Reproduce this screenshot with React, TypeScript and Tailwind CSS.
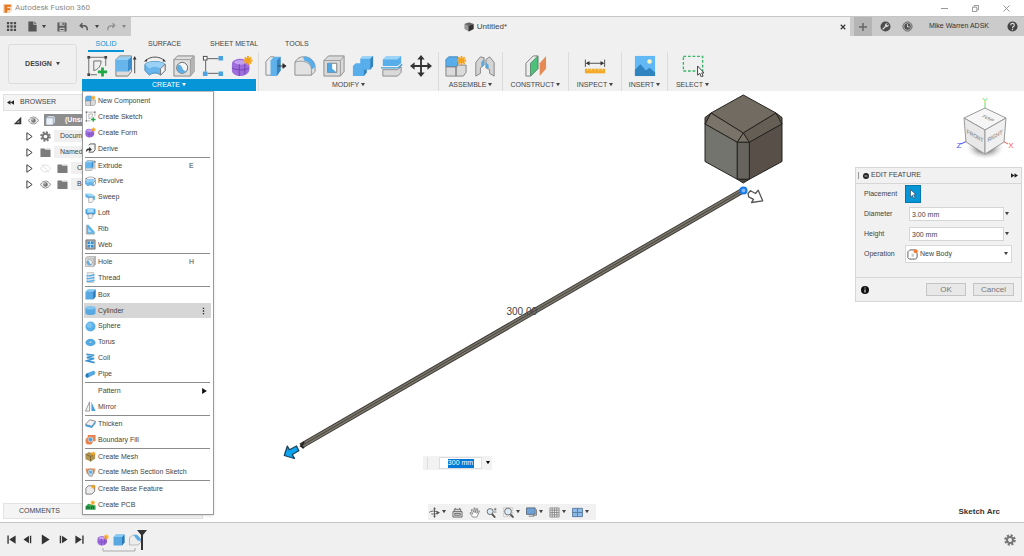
import type { ReactNode } from 'react';
import { clsx } from 'clsx';

type IconProps = { className?: string };
type IconType = (props: IconProps) => ReactNode;

const makeIcon = (children: ReactNode): IconType => ({ className = 'size-6' }) => (
  <svg viewBox="0 0 24 24" className={clsx('shrink-0', className)} aria-hidden="true">{children}</svg>
);

const star = (x: number, y: number, r = 5) => (
  <g stroke="#f5a31a" strokeWidth="2">
    <path d={`M${x - r} ${y}H${x + r}M${x} ${y - r}V${y + r}M${x - r + 1.5} ${y - r + 1.5}L${x + r - 1.5} ${y + r - 1.5}M${x + r - 1.5} ${y - r + 1.5}L${x - r + 1.5} ${y + r - 1.5}`} />
    <circle cx={x} cy={y} r={r / 2.4} fill="#f5a31a" stroke="none" />
  </g>
);

/* ---------- modelling icons ---------- */

const SketchIcon = makeIcon(
  <>
    <path d="M4 2.500H20M3 4V20M5 21.500H12M21.500 4V12" stroke="#666" strokeWidth="1" fill="none" />
    <path d="M8.500 6.500H16.500C16.500 12 13 16 8.500 17Z" fill="none" stroke="#666" />
    <path d="M1.500 1h3v3h-3zM20 1h3v3h-3zM1.500 20h3v3h-3z" fill="#444" />
    <path d="M18 13.500v10M13 18.500h10" stroke="#22a845" strokeWidth="3" />
  </>
);
const ExtrudeIcon = makeIcon(
  <>
    <path d="M1 21V5l4-4h13v17l-4 5H1z" fill="#dcdcdc" stroke="#777" />
    <path d="M1 18V5.500L5 2h13l-4 3.500V18z" fill="#67b5ea" />
    <path d="M14 5.500L18 2v13l-4 3.500z" fill="#3b8ecb" />
    <path d="M1 5.500L5 2h13l-4 3.500z" fill="#94d0f5" />
    <path d="M21.500 20V4" stroke="#444" />
    <path d="M19.500 5l2-4 2 4z" fill="#333" />
  </>
);
const RevolveIcon = makeIcon(
  <>
    <path d="M2 6C7 1 17 1 22 6" fill="none" stroke="#444" />
    <path d="M0 7l3-3 .6 3zM24 7l-3-3-.6 3z" fill="#333" />
    <path d="M1 10c6-4 16-4 22 0v7l-5 5c-3-3-9-3-12 0l-5-5z" fill="#67b5ea" stroke="#4287b7" />
    <path d="M1 10c6-4 16-4 22 0l-5 5c-3-3-9-3-12 0z" fill="#98d1f5" />
    <path d="M18 15l5-5v7l-5 5z" fill="#f2f2f2" stroke="#777" />
  </>
);
const HoleIcon = makeIcon(
  <>
    <path d="M1 5l4-4h18v17l-4 5H1z" fill="#dedede" stroke="#808080" />
    <path d="M19 5l4-4v17l-4 5z" fill="#b4b4b4" />
    <path d="M1 5h18v18M19 5l4-4" fill="none" stroke="#999" />
    <circle cx="10" cy="14" r="6" fill="#f6f6f6" stroke="#666" />
    <path d="M5 11c2-1 4 0 5 3s3 4 5 3a5.500 5.500 0 0 1-10-6z" fill="#5caee5" />
  </>
);
const PatternIcon = makeIcon(
  <>
    <path d="M6 4h12M4 6v12M6 20h12" stroke="#555" />
    <rect x="1.500" y="1.500" width="4" height="4" fill="#fff" stroke="#444" />
    <path d="M18 1h5v5h-5zM1 18h5v5H1zM18 18h5v5h-5z" fill="#4aa3df" />
  </>
);
const FormIcon = makeIcon(
  <>
    <path d="M1 10c0-4 3-5 8-6 5 0 10 2 11 6v7c-1 4-6 6-10 6s-9-2-9-6z" fill="#9d6cdd" />
    <path d="M3 8c4-4 11-3 15 0-3 3-11 4-15 0z" fill="#c3a0f1" />
    <path d="M1 14c5 3 14 3 19 0M9 10v13M15 9v12" fill="none" stroke="#6e42ad" />
    {star(18.5, 6)}
  </>
);
const ComponentIcon = makeIcon(
  <>
    <path d="M1 5l3-3h10v9l-2 2H1z" fill="#58adeb" stroke="#3e87bb" />
    <path d="M1 13h11v10H1zM12 13l3-2h8v8l-3 4h-8z" fill="#dadada" stroke="#808080" />
    {star(18, 6)}
  </>
);
const PressPullIcon = makeIcon(
  <>
    <path d="M1 7l5-5h4v20H1z" fill="#ececec" stroke="#888" />
    <path d="M6 6l4-4h7v15l-4 6H6z" fill="#5fb1ea" />
    <path d="M13 6l4-4v15l-4 6z" fill="#3685c0" />
    <path d="M14 12h8M19.500 9.500L23 12l-3.500 2.500z" fill="#333" stroke="#333" />
  </>
);
const FilletIcon = makeIcon(
  <>
    <path d="M1 22V8c2-4 5-6 9-6h3c6 1 10 6 10 11v5l-4 4z" fill="#e2e2e2" stroke="#888" />
    <path d="M10 2h3c6 1 10 6 10 11l-4 3c0-5-3-9-8-10z" fill="#58adeb" />
    <path d="M1 8c7-3 18-1 18 8v6" fill="none" stroke="#999" />
  </>
);
const ShellIcon = makeIcon(
  <>
    <path d="M1 6l5-5h17v17l-4 5H1z" fill="#dadada" stroke="#888" />
    <path d="M5 9h10v10H5z" fill="#fff" stroke="#777" />
    <path d="M5 9v10h10l-5-4V9z" fill="#4fa7e2" />
    <path d="M1 6h18v17M19 6l4-5" fill="none" stroke="#999" />
  </>
);
const CombineIcon = makeIcon(
  <>
    <path d="M1 12l3-3h5V4l3-3h11v11l-3 4h-4v3l-3 4H1z" fill="#58adeb" />
    <path d="M9 4l3-3h11l-3 3z" fill="#9bd4f7" />
    <path d="M20 4l3-3v11l-3 4zM13 16h3v3l-3 4z" fill="#3583bd" />
  </>
);
const SplitIcon = makeIcon(
  <>
    <path d="M2 5l4-4h16v8l-4 3H2z" fill="#58adeb" />
    <path d="M2 5l4-4h16l-4 4z" fill="#9bd4f7" />
    <path d="M0 14h19l4-4" fill="none" stroke="#3c9edc" strokeWidth="1.500" />
    <path d="M2 16h16l4-3v6l-4 4H2z" fill="#dadada" stroke="#888" />
  </>
);
const MoveIcon = makeIcon(
  <>
    <path d="M12 3v18M3 12h18" stroke="#333" strokeWidth="2" />
    <path d="M12 0l4 5H8zM12 24l4-5H8zM0 12l5-4v8zM24 12l-5-4v8z" fill="#333" />
  </>
);
const JointIcon = makeIcon(
  <>
    <path d="M2 8l5-6 4 1v8l-4 3v6l-5 3zM22 8l-5-6-4 3v9l4 2v4l5 3z" fill="#d4d4d4" stroke="#808080" />
    <path d="M8 8l3-4v7l-3 3zM13 8l3 3v4l-3-1z" fill="#58a9df" />
  </>
);
const PlaneIcon = makeIcon(
  <>
    <path d="M1 9l8-8h5v14l-8 8H1z" fill="#ececec" stroke="#777" />
    <path d="M6 9l8-8v14l-8 8z" fill="#4ec27b" stroke="#57896a" />
    <path d="M16 9l7-8v14l-7 8z" fill="#e58a54" />
  </>
);
const MeasureIcon = makeIcon(
  <>
    <path d="M1.500 5v8M22.500 5v8M3 9h18" stroke="#444" />
    <path d="M2 9l4-2.500v5zM22 9l-4-2.500v5z" fill="#333" />
    <path d="M1 15h22v5H1z" fill="#f3aa29" />
    <path d="M4 15v2M8 15v2M12 15v2M16 15v2M20 15v2" stroke="#fbdc9f" />
  </>
);
const PictureIcon = makeIcon(
  <>
    <path d="M1 1h22v22H1z" fill="#62b8f5" />
    <circle cx="17" cy="7" r="2.500" fill="#fff6bf" />
    <path d="M1 16l6-6 6 7 4-3 6 5v4H1z" fill="#2f83be" />
  </>
);
const SelectIcon = makeIcon(
  <>
    <path d="M1.500 1.500h21v16h-21z" fill="none" stroke="#35b566" strokeWidth="1.500" strokeDasharray="3 2" />
    <path d="M17 12v10l2.500-2 1.500 4 2-1-1.500-3.500H24z" fill="#fff" stroke="#333" />
  </>
);
const DeriveIcon = makeIcon(
  <>
    <path d="M8 5l3-3h11v13l-4 5H8" fill="#f3f3f3" stroke="#555" strokeWidth="2" />
    <path d="M2 20c0-7 3-8 7-8V8l6 6-6 5v-3c-3 0-5 1-7 4z" fill="#333" />
  </>
);
const SweepIcon = makeIcon(
  <>
    <path d="M1 4h12l9 5v8h-8L1 11z" fill="#62b5ea" />
    <path d="M1 4h12l9 5H10z" fill="#a2d8f8" />
    <path d="M8 12h10v7l-3 4H8z" fill="#f2f2f2" stroke="#777" />
  </>
);
const LoftIcon = makeIcon(
  <>
    <path d="M1 3l4-2h15l3 2v9l-5 4H6l-5-4z" fill="#4ba5e2" />
    <path d="M5 1h14v9H5z" fill="#a8dbf8" />
    <path d="M7 13h10v6l-3 4H7z" fill="#eee" stroke="#777" />
  </>
);
const RibIcon = makeIcon(
  <>
    <path d="M4 2l3-1 14 16v5H4z" fill="#62b5ea" />
    <path d="M3 2v20h18" fill="none" stroke="#aaa" strokeWidth="2" />
    <path d="M7 9l8 9H7z" fill="#b0ddf8" />
  </>
);
const WebIcon = makeIcon(
  <>
    <path d="M2 2h20v20H2z" fill="#a8a8a8" stroke="#777" strokeWidth="2" />
    <path d="M6 6h5v5H6zM13 6h5v5h-5zM6 13h5v5H6zM13 13h5v5h-5z" fill="#368fd0" />
    <path d="M12 4v16M4 12h16" stroke="#a9dcff" strokeWidth="2" />
  </>
);
const ThreadIcon = makeIcon(
  <>
    <path d="M5 1h14v22H5z" fill="#e9e9e9" stroke="#999" />
    <path d="M3 8c7 2 14-2 18-2M3 14c7 2 14-2 18-2M3 20c7 2 14-2 18-2" fill="none" stroke="#5fb0ea" strokeWidth="3" />
  </>
);
const BoxIcon = makeIcon(
  <>
    <path d="M1 6l5-5h17v16l-5 6H1z" fill="#58a9e1" />
    <path d="M18 6l5-5v16l-5 6z" fill="#2d7cb9" />
    <path d="M1 6l5-5h17l-5 5z" fill="#88c9f2" />
  </>
);
const CylinderIcon = makeIcon(
  <>
    <path d="M1 6v13c3 4 19 4 22 0V6z" fill="#58a9e1" />
    <ellipse cx="12" cy="6" rx="11" ry="4" fill="#80c4ef" />
  </>
);
const SphereIcon = makeIcon(
  <>
    <circle cx="12" cy="12" r="11" fill="#5cb0e8" />
    <circle cx="10" cy="9" r="6" fill="#7cc3ef" />
  </>
);
const TorusIcon = makeIcon(
  <>
    <ellipse cx="12" cy="12" rx="11" ry="8" fill="#55a9e2" />
    <ellipse cx="12" cy="11" rx="4" ry="2" fill="#e8f6ff" stroke="#2c78b3" />
  </>
);
const CoilIcon = makeIcon(
  <path d="M3 3l17 2L4 10l16 2L4 17l17 4" fill="none" stroke="#3b94d0" strokeWidth="3.500" />
);
const PipeIcon = makeIcon(
  <>
    <path d="M3 10L18 4c4 0 6 5 3 8L6 19z" fill="#58a9e1" />
    <ellipse cx="4.500" cy="14.500" rx="3.500" ry="4.500" fill="#2877b2" />
  </>
);
const MirrorIcon = makeIcon(
  <>
    <path d="M10 2v20H1z" fill="#f4f4f4" stroke="#777" strokeWidth="1.500" />
    <path d="M14 2v20h9z" fill="#489fdb" />
  </>
);
const ThickenIcon = makeIcon(
  <>
    <path d="M1 14L10 4l13 3-8 11z" fill="#f1f1f1" stroke="#666" strokeWidth="1.500" />
    <path d="M1 14l14 4 8-11v5l-8 10-14-4z" fill="#459ddb" />
  </>
);
const BoundaryIcon = makeIcon(
  <>
    <path d="M6 2h17v14h-6V8H6z" fill="#e9824c" />
    <circle cx="9" cy="15" r="8" fill="#e9824c" />
    <circle cx="12" cy="12" r="5" fill="#4fa7e2" stroke="#fff" />
  </>
);
const MeshIcon = makeIcon(
  <>
    <path d="M1 7l7-5 14 5v10l-9 6-12-5z" fill="#b19452" />
    <path d="M1 7l11 5 10-5M12 12v11" fill="none" stroke="#6e5726" strokeWidth="1.500" />
    {star(18, 6)}
  </>
);
const MeshSectionIcon = makeIcon(
  <>
    <path d="M1 3h22l-3 12H4z" fill="#ea9462" />
    <path d="M5 8l7-4 7 4-3 12H9z" fill="#b2d8ef" stroke="#8c5b3b" />
    <path d="M8 9h8l-3 6z" fill="#4ea0d8" />
  </>
);
const BaseIcon = makeIcon(
  <>
    <path d="M2 9l5-5h14v12l-6 6H2z" fill="#ededed" stroke="#777" strokeWidth="2" />
    {star(18, 6)}
  </>
);
const PcbIcon = makeIcon(
  <>
    <path d="M1 14l6-6 16 4v9H1z" fill="#36a652" />
    <path d="M4 20v-5h5v5M14 20v-5h5v5" fill="none" stroke="#145f28" strokeWidth="2" />
    {star(17, 6)}
  </>
);
const ChamferIcon = makeIcon(
  <>
    <path d="M1 22V7l7-5h8l7 7v8l-5 5z" fill="#ececec" stroke="#888" />
    <path d="M9 2h7l7 7v5l-6-1z" fill="#58adeb" />
  </>
);

/* ---------- interface icons ---------- */

const GridIcon = makeIcon(<path d="M2 2h5v5H2zM9.500 2h5v5h-5zM17 2h5v5h-5zM2 9.500h5v5H2zM9.500 9.500h5v5h-5zM17 9.500h5v5h-5zM2 17h5v5H2zM9.500 17h5v5h-5zM17 17h5v5h-5z" fill="#4b4b4b" />);
const FileIcon = makeIcon(<path d="M3 1h11v7h7v15H3zM16 1l5 5h-5z" fill="#555" />);
const SaveIcon = makeIcon(
  <>
    <path d="M1 1h20l2 2v20H1z" fill="#606060" />
    <path d="M6 1h12v8H6zM6 14h12v9H6z" fill="#c4c4c4" />
    <path d="M13 2h3v5h-3zM8 17h8v2H8z" fill="#555" />
  </>
);
const UndoIcon = makeIcon(<path d="M8 3L3 9l6 5M3 9h9c6 0 8 4 8 11" fill="none" stroke="#585858" strokeWidth="3.500" />);
const RedoIcon = makeIcon(<path d="M16 3l5 6-6 5M21 9h-9c-6 0-8 4-8 11" fill="none" stroke="#8f8f8f" strokeWidth="3" />);
const EyeIcon = makeIcon(
  <>
    <path d="M1 12c6-10 16-10 22 0-6 10-16 10-22 0z" fill="#eee" stroke="#888" strokeWidth="2" />
    <circle cx="12" cy="12" r="5" fill="#777" />
    <circle cx="10.500" cy="10.500" r="1.500" fill="#fff" />
  </>
);
const HiddenIcon = makeIcon(<path d="M1 12c6-10 16-10 22 0-6 10-16 10-22 0zM4 3l16 18" fill="none" stroke="#dcdcdc" strokeWidth="2" />);
const GearIcon = makeIcon(
  <>
    <circle cx="12" cy="12" r="9" fill="none" stroke="#777" strokeWidth="5" strokeDasharray="4 3.070" />
    <circle cx="12" cy="12" r="6" fill="none" stroke="#777" strokeWidth="4" />
  </>
);
const FolderIcon = makeIcon(
  <>
    <path d="M1 3h9l2 3h11v16H1z" fill="#7c7c7c" />
    <path d="M12 4h11v1H13z" fill="#999" />
  </>
);
const BodyIcon = makeIcon(<path d="M2 6l4-4h16v14l-4 6H2zM2 6h16v16M18 6l4-4" fill="#eaf1fa" stroke="#7f8893" strokeWidth="1.500" />);
const RootMarkIcon = makeIcon(
  <>
    <path d="M22 2v20H2z" fill="#333" />
    <path d="M17 12v6h-7z" fill="#aaa" />
  </>
);
const ExpandIcon = makeIcon(<path d="M5 2l14 10L5 22z" fill="#fff" stroke="#333" strokeWidth="2.500" />);
const DocCubeIcon = makeIcon(
  <>
    <path d="M1 5l11-4 11 4v12l-11 6-11-6z" fill="#999" />
    <path d="M11 9l12-4v12l-12 6z" fill="#333" />
    <path d="M1 5l11-4 11 4-12 4z" fill="#666" />
  </>
);
const WrenchIcon = makeIcon(
  <>
    <circle cx="12" cy="12" r="11" fill="#4d4d4d" />
    <path d="M5 17l6-6c-1-4 2-7 6-6l-3 3 2 2 3-3c1 4-2 7-6 6l-6 6z" fill="#d8d8d8" />
  </>
);
const ClockIcon = makeIcon(
  <>
    <circle cx="12" cy="12" r="10" fill="#bbb" stroke="#5d5d5d" strokeWidth="2" />
    <circle cx="12" cy="12" r="7" fill="#505050" />
    <path d="M12 7v6h5" fill="none" stroke="#ddd" strokeWidth="2" />
  </>
);
const HelpIcon = makeIcon(
  <>
    <circle cx="12" cy="12" r="11" fill="#444" />
    <path d="M8 9c0-5 8-5 8 0 0 3-4 3-4 6M12 17v3" fill="none" stroke="#ddd" strokeWidth="2.500" />
  </>
);
const OrbitIcon = makeIcon(
  <>
    <path d="M12 3v18M1 12c0-4 18-4 18 0 0 3-10 4-14 3" fill="none" stroke="#555" strokeWidth="2" />
    <path d="M12 0l3 5H9zM12 24l3-5H9zM16 8l8 4-7 5z" fill="#555" />
  </>
);
const LookIcon = makeIcon(<path d="M2 10h20v12H2zM5 10V5h14v5M7 5V2M17 5V2M6 14h12v4H6z" fill="#ddd" stroke="#666" strokeWidth="2" />);
const HandIcon = makeIcon(<path d="M8 22l-6-9 2-1 4 4L5 6l2-1 4 7V2h2l1 10 3-9 2 1-2 10 4-6 2 1-4 9-2 4z" fill="#fff" stroke="#666" strokeWidth="1.500" />);
const ZoomIcon = makeIcon(
  <>
    <circle cx="9" cy="10" r="6.500" fill="#dceaf5" stroke="#666" strokeWidth="2" />
    <path d="M13 15l7 8" stroke="#555" strokeWidth="4" />
    <path d="M17 5h6M20 2v6M17 11h6" stroke="#555" strokeWidth="1.500" />
  </>
);
const FitIcon = makeIcon(
  <>
    <path d="M1 1h20v20H1z" fill="none" stroke="#888" strokeDasharray="3 2" />
    <circle cx="11" cy="10" r="7.500" fill="#dceaf5" stroke="#666" strokeWidth="2" />
    <path d="M16 16l7 7" stroke="#555" strokeWidth="4" />
  </>
);
const DisplayIcon = makeIcon(
  <>
    <path d="M1 2h19v14H1z" fill="#6fa3d8" stroke="#5d6b7a" strokeWidth="2" />
    <path d="M6 20h12M21 6h2v12h-8" fill="none" stroke="#777" strokeWidth="2" />
  </>
);
const GridViewIcon = makeIcon(<path d="M2 2h20v20H2zM7 2v20M12 2v20M17 2v20M2 7h20M2 12h20M2 17h20" fill="#e8e8e8" stroke="#777" strokeWidth="1.500" />);
const ViewportIcon = makeIcon(<path d="M1 3h22v18H1zM12 3v18M1 12h22" fill="#8bb9e8" stroke="#567a9f" strokeWidth="2" />);

const Caret = ({ className = 'w-[5px]' }: IconProps) => (
  <svg viewBox="0 0 10 8" className={clsx('shrink-0', className)} aria-hidden="true"><path d="M0 0h10L5 8z" fill="currentColor" /></svg>
);
const DoubleArrow = ({ className }: IconProps) => (
  <svg viewBox="0 0 16 10" className={clsx('h-[5px]', className)} aria-hidden="true"><path d="M8 0v10L0 5zM16 0v10L8 5z" fill="#222" /></svg>
);

/* ---------- data ---------- */

type MenuItem = { label: string; icon?: IconType; shortcut?: string; active?: boolean; submenu?: boolean };

const createMenu: MenuItem[][] = [
  [
    { label: 'New Component', icon: ComponentIcon },
    { label: 'Create Sketch', icon: SketchIcon },
    { label: 'Create Form', icon: FormIcon },
    { label: 'Derive', icon: DeriveIcon },
  ],
  [
    { label: 'Extrude', icon: ExtrudeIcon, shortcut: 'E' },
    { label: 'Revolve', icon: RevolveIcon },
    { label: 'Sweep', icon: SweepIcon },
    { label: 'Loft', icon: LoftIcon },
    { label: 'Rib', icon: RibIcon },
    { label: 'Web', icon: WebIcon },
  ],
  [
    { label: 'Hole', icon: HoleIcon, shortcut: 'H' },
    { label: 'Thread', icon: ThreadIcon },
  ],
  [
    { label: 'Box', icon: BoxIcon },
    { label: 'Cylinder', icon: CylinderIcon, active: true },
    { label: 'Sphere', icon: SphereIcon },
    { label: 'Torus', icon: TorusIcon },
    { label: 'Coil', icon: CoilIcon },
    { label: 'Pipe', icon: PipeIcon },
  ],
  [
    { label: 'Pattern', submenu: true },
    { label: 'Mirror', icon: MirrorIcon },
  ],
  [
    { label: 'Thicken', icon: ThickenIcon },
    { label: 'Boundary Fill', icon: BoundaryIcon },
  ],
  [
    { label: 'Create Mesh', icon: MeshIcon },
    { label: 'Create Mesh Section Sketch', icon: MeshSectionIcon },
  ],
  [
    { label: 'Create Base Feature', icon: BaseIcon },
    { label: 'Create PCB', icon: PcbIcon },
  ],
];

const toolGroups: { label: string; width: string; icons: IconType[] }[] = [
  { label: 'MODIFY', width: 'w-[180px]', icons: [PressPullIcon, FilletIcon, ShellIcon, CombineIcon, SplitIcon, MoveIcon] },
  { label: 'ASSEMBLE', width: 'w-16', icons: [ComponentIcon, JointIcon] },
  { label: 'CONSTRUCT', width: 'w-[66px]', icons: [PlaneIcon] },
  { label: 'INSPECT', width: 'w-[53px]', icons: [MeasureIcon] },
  { label: 'INSERT', width: 'w-[46px]', icons: [PictureIcon] },
  { label: 'SELECT', width: 'w-[50px]', icons: [SelectIcon] },
];

const browserRows: { label: string; icon: IconType; eye?: IconType }[] = [
  { label: 'Document', icon: GearIcon },
  { label: 'Named', icon: FolderIcon },
  { label: 'Origin', icon: FolderIcon, eye: HiddenIcon },
  { label: 'Bodies', icon: FolderIcon, eye: EyeIcon },
];

const navTools: { name: string; icon: IconType; caret?: boolean }[] = [
  { name: 'Orbit', icon: OrbitIcon, caret: true },
  { name: 'Look At', icon: LookIcon },
  { name: 'Pan', icon: HandIcon },
  { name: 'Zoom', icon: ZoomIcon },
  { name: 'Fit', icon: FitIcon, caret: true },
  { name: 'Display Settings', icon: DisplayIcon, caret: true },
  { name: 'Grid and Snaps', icon: GridViewIcon, caret: true },
  { name: 'Viewports', icon: ViewportIcon, caret: true },
];

const playback = [
  { name: 'Start', d: 'M3 3h3v18H3zM21 3v18L7 12z' },
  { name: 'Step back', d: 'M1 12L13 4v16zM15 4h3v16h-3z' },
  { name: 'Play', d: 'M4 1l17 11L4 23z' },
  { name: 'Step forward', d: 'M23 12L11 4v16zM6 4h3v16H6z' },
  { name: 'End', d: 'M18 3h3v18h-3zM3 3v18l14-9z' },
];

/* ---------- sections ---------- */

const TitleBar = () => (
  <div className="flex h-4 items-center bg-white pl-[3px] text-[#8a8a8a]">
    <svg viewBox="0 0 24 24" className="size-[9px]" aria-hidden="true">
      <path d="M0 0h24v18l-6 6H0z" fill="#f8d9bd" />
      <path d="M4 2h17v5H11v4h8v5h-8v7H4z" fill="#e8761b" />
    </svg>
    <span className="ml-[3px] flex-1 font-[Roboto,sans-serif] text-[8px]">Autodesk Fusion 360</span>
    <div className="flex items-center gap-6 pr-[14px]">
      <button aria-label="Minimize"><svg viewBox="0 0 8 8" className="size-[7px]"><path d="M0 4h8" stroke="#888" /></svg></button>
      <button aria-label="Restore"><svg viewBox="0 0 8 8" className="size-[7px]"><path d="M.5 2.500h5v5h-5zM2.500 2V.5h5v5H6" fill="none" stroke="#888" /></svg></button>
      <button aria-label="Close"><svg viewBox="0 0 8 8" className="size-[7px]"><path d="M.5.5l7 7M7.500.5l-7 7" stroke="#888" /></svg></button>
    </div>
  </div>
);

const DocumentBar = () => (
  <div className="flex h-5 border-t border-[#c6c6c6] bg-[#cbcbcb] text-[#444]">
    <div className="flex w-[131px] items-center pl-[6px]">
      <button aria-label="Data panel"><GridIcon className="size-[11px]" /></button>
      <button aria-label="File" className="ml-[10px] flex items-center gap-1"><FileIcon className="size-[11px]" /><Caret className="w-1" /></button>
      <button aria-label="Save" className="ml-[11px]"><SaveIcon className="size-[10px]" /></button>
      <button aria-label="Undo" className="ml-3 flex items-center gap-[6px]"><UndoIcon className="size-[10px]" /><Caret className="w-1" /></button>
      <button aria-label="Redo" className="ml-[7px] flex items-center gap-[6px] text-[#888]"><RedoIcon className="size-[10px]" /><Caret className="w-1" /></button>
    </div>
    <div className="flex flex-1 items-center bg-[#f0f0f0] pr-1">
      <div className="flex flex-1 items-center justify-center gap-[3px] text-[8px]">
        <DocCubeIcon className="size-[10px]" />
        <span>Untitled*</span>
      </div>
      <button aria-label="Close document"><svg viewBox="0 0 8 8" className="size-[6px]"><path d="M1 1l6 6M7 1L1 7" stroke="#333" strokeWidth="1.500" /></svg></button>
    </div>
    <div className="flex items-center pl-1 text-[7px]">
      <button aria-label="New design" className="flex h-full w-[18px] items-center justify-center bg-[#b5b5b5]">
        <svg viewBox="0 0 8 8" className="size-2"><path d="M4 0v8M0 4h8" stroke="#666" strokeWidth="1.500" /></svg>
      </button>
      <button aria-label="Extensions" className="ml-2"><WrenchIcon className="size-[11px]" /></button>
      <button aria-label="Job status" className="ml-[11px]"><ClockIcon className="size-[11px]" /></button>
      <button className="ml-4 text-[#333]">Mike Warren ADSK</button>
      <button aria-label="Help" className="mr-[6px] ml-[18px]"><HelpIcon className="size-[11px]" /></button>
    </div>
  </div>
);

const CreateMenu = () => (
  <div className="absolute top-full left-0 z-20 flex h-[424px] w-[132px] flex-col border border-[#999] border-t-[#bbb] bg-white pt-px pr-[2px] pb-px pl-px shadow-sm">
    {createMenu.map((group, i) => (
      <div key={i} className="contents">
        {i > 0 && <hr className="mx-px border-[#8c8c8c]" />}
        {group.map(({ label, icon: Icon, shortcut, active, submenu }) => (
          <button
            key={label}
            className={clsx('flex min-h-0 flex-1 items-center gap-[2px] pr-1 pl-px text-left text-[7px] text-[#444]', active && 'bg-[#d6d6d6]')}
          >
            {Icon ? <Icon className="size-[11px]" /> : <span className="w-[11px]" />}
            <span className="flex-1 whitespace-nowrap">{label}</span>
            {shortcut && <span className="w-[18px]">{shortcut}</span>}
            {active && <svg viewBox="0 0 4 12" className="mr-[2px] h-2 w-[3px]"><path d="M1 1h2v2H1zM1 5h2v2H1zM1 9h2v2H1z" fill="#222" /></svg>}
            {submenu && <svg viewBox="0 0 8 10" className="h-[6px] w-[5px]"><path d="M0 0l8 5-8 5z" fill="#111" /></svg>}
          </button>
        ))}
      </div>
    ))}
  </div>
);

const Toolbar = () => (
  <div className="flex h-[55px] bg-[#f0f0f0] text-[7px] text-[#444]">
    <button className="mt-2 ml-2 flex h-10 w-[69px] items-center justify-center gap-1 rounded-[3px] border border-[#dcdcdc] font-bold">
      DESIGN <Caret className="w-1" />
    </button>
    <div className="ml-[5px] flex flex-col">
      <nav className="flex h-4 items-end pl-[6px] leading-[12px]">
        <a href="#solid" className="w-9 border-b-2 border-[#0696d7] text-center text-[#0696d7]">SOLID</a>
        <a href="#surface" className="ml-6 border-b-2 border-transparent">SURFACE</a>
        <a href="#sheet" className="ml-[29px] border-b-2 border-transparent">SHEET METAL</a>
        <a href="#tools" className="ml-[27px] border-b-2 border-transparent">TOOLS</a>
      </nav>
      <div className="flex flex-1 leading-[12px]">
        <div className="relative flex w-[174px] flex-col justify-end">
          <div className="flex flex-1 items-center justify-center gap-[5px]">
            {[SketchIcon, ExtrudeIcon, RevolveIcon, HoleIcon, PatternIcon, FormIcon].map((Icon, i) => (
              <button key={i} aria-label="Create tool"><Icon className="size-6 p-px" /></button>
            ))}
          </div>
          <button className="flex h-3 items-center justify-center gap-[2px] bg-[#0696d7] text-white">CREATE <Caret className="w-1" /></button>
          <CreateMenu />
        </div>
        {toolGroups.map(({ label, width, icons }, g) => (
          <div key={label} className={clsx('flex flex-col', width, g === 0 && 'ml-[2px]')}>
            <div className="flex flex-1 items-center justify-center gap-[5px] border-l border-[#dcdcdc]">
              {icons.map((Icon, i) => (
                <button key={i} aria-label={`${label} tool`}><Icon className="size-6 p-px" /></button>
              ))}
            </div>
            <button className="flex h-3 items-center justify-center gap-[2px] border-l border-[#dcdcdc]">{label} <Caret className="w-1" /></button>
          </div>
        ))}
      </div>
    </div>
  </div>
);

const Browser = () => (
  <aside className="absolute top-[3px] left-[3px] w-[200px] text-[7px] text-[#444]">
    <div className="flex h-[17px] items-center gap-[6px] border border-[#e0e0e0] bg-[#f4f4f4] pl-[3px]">
      <DoubleArrow className="w-[7px]" />BROWSER
    </div>
    <div className="mt-px flex h-4 items-center pl-[10px]">
      <RootMarkIcon className="size-[9px]" />
      <EyeIcon className="ml-[6px] size-[11px]" />
      <div className="ml-[5px] flex h-3 flex-1 items-center gap-[9px] bg-[#8e8e8e] pl-px font-bold text-white">
        <BodyIcon className="size-[11px]" />(Unsaved)
      </div>
    </div>
    {browserRows.map(({ label, icon: Icon, eye: Eye }) => (
      <div key={label} className="flex h-4 items-center pl-[22px]">
        <ExpandIcon className="mr-[6px] size-[9px]" />
        {Eye && <Eye className="mr-[6px] size-[11px]" />}
        <Icon className="mr-[3px] size-[11px]" />
        <span className="flex h-3 flex-1 items-center bg-[#f0f0f0] pl-[6px]">{label}</span>
      </div>
    ))}
  </aside>
);

const Model = () => (
  <svg viewBox="0 91 1024 431" className="absolute inset-0 size-full" role="img" aria-label="Model">
    <g stroke="#25231f" strokeWidth="1" strokeLinejoin="round">
      <path d="M743.300 95L776 113l-32.700 20L711 113z" fill="#716b61" />
      <path d="M711 113l32.300 20-6 9.300L705 124z" fill="#797369" />
      <path d="M776 113l-32.700 20 6 9.300L782 124z" fill="#655e55" />
      <path d="M711 113l-6 4.500v6.500zM776 113l6 4.500v6.500z" fill="#5d584f" />
      <path d="M705 124l32.300 18.300v37L705 161.500z" fill="#73746d" />
      <path d="M782 124l-32.700 18.300v37L782 161.500z" fill="#584f48" />
      <path d="M743.300 133l6 9.300h-12z" fill="#787267" />
      <path d="M737.300 142.300h12v37h-12z" fill="#66645d" />
      <path d="M737.300 179.300h12l-6 3.700z" fill="#4a453f" />
    </g>
    <path d="M743 190.500L301 446" stroke="#3d3a35" strokeWidth="6" />
    <path d="M742 191L302 445.500" stroke="#7b776d" strokeWidth="4" />
    <path d="M743 190.500L301 446" stroke="#45423c" strokeWidth="1" />
    <path d="M304 442l-3 4 3 2" fill="none" stroke="#222" strokeWidth="2" />
    <circle cx="743.500" cy="190.500" r="3" fill="#7db8f5" stroke="#1479ea" strokeWidth="2" />
    <path d="M748 193.500l2.500-2.800 5 2.800 2.700-3.300 4.500 10.600-11.200 1.700 2-3.200-4.800-2.500z" fill="#fff" stroke="#555" strokeWidth="1.300" strokeLinejoin="round" />
    <path d="M284.300 455.500l3-9.300 2.200 3.600 7-3.800 2.300 4.700-6.500 3.800 2.200 4z" fill="#0fa4ef" stroke="#18435c" strokeWidth="1.300" strokeLinejoin="round" />
    <text x="506.500" y="314.500" fontSize="10" fill="#444">300.00</text>
  </svg>
);

const ViewCube = () => (
  <svg viewBox="0 0 62 66" className="absolute top-1 right-[7px] h-[66px] w-[62px]" role="img" aria-label="View cube">
    <defs>
      <radialGradient id="cube-shadow"><stop offset="0.400" stopColor="#999" /><stop offset="1" stopColor="#fff" stopOpacity="0" /></radialGradient>
    </defs>
    <ellipse cx="30" cy="53" rx="20" ry="12" fill="url(#cube-shadow)" />
    <path d="M30 13V8" stroke="#5fdc5f" />
    <path d="M12 46l-6 3" stroke="#44f" />
    <path d="M48 46l5 3" stroke="#f55" />
    <path d="M30 13l21 10-21 12L9 23z" fill="#f6f6f6" stroke="#999" />
    <path d="M9 23l21 12v24L11 47z" fill="#e8e8e8" stroke="#999" />
    <path d="M51 23L30 35v24l19-12z" fill="#f0f0f0" stroke="#999" />
    <g fontSize="6" fontWeight="bold" fill="#999" textAnchor="middle">
      <text transform="matrix(.9 .45 -.8 .4 31 24)">TOP</text>
      <text transform="matrix(.8 .45 0 1 20 43)">FRONT</text>
      <text transform="matrix(.8 -.45 0 1 40 43)">RIGHT</text>
    </g>
    <g fontSize="8" textAnchor="middle">
      <text x="30" y="8" fill="#5fdc5f">Y</text>
      <text x="4" y="53" fill="#4b4bf0">Z</text>
      <text x="56" y="53" fill="#f55">X</text>
    </g>
  </svg>
);

const DimensionField = ({ id, label, value }: { id: string; label: string; value: string }) => (
  <div className="flex h-5 items-center">
    <label htmlFor={id} className="w-[45px]">{label}</label>
    <input id={id} defaultValue={value} className="h-[14px] w-[95px] border border-[#d5d5d5] bg-white px-[2px]" />
    <Caret className="ml-px w-1" />
  </div>
);

const EditFeature = () => (
  <section className="absolute top-[76px] right-[2px] w-[167px] border border-[#d6d6d6] bg-[#f1f1f1] text-[7px] text-[#444]">
    <header className="flex h-4 items-center border-b border-[#d6d6d6] pr-[3px] pl-[2px]">
      <span className="h-[7px] w-[2px] border-l border-[#999]" />
      <svg viewBox="0 0 8 8" className="mr-[2px] ml-[3px] size-[6px]" aria-hidden="true"><circle cx="4" cy="4" r="4" fill="#222" /><path d="M2 4h4" stroke="#fff" /></svg>
      <h2 className="flex-1">EDIT FEATURE</h2>
      <DoubleArrow className="w-[7px] rotate-180" />
    </header>
    <form className="pl-2" onSubmit={(e) => e.preventDefault()}>
      <div className="flex h-5 items-center">
        <span className="w-[41px]">Placement</span>
        <button type="button" aria-label="Placement" className="flex h-[18px] w-4 items-center justify-center border border-[#0478ad] bg-[#0696d7]">
          <svg viewBox="0 0 12 16" className="h-[10px] w-2"><path d="M2 1v12l3-3 2 5 2-1-2-5h4z" fill="#fff" stroke="#345" /></svg>
        </button>
      </div>
      <DimensionField id="diameter" label="Diameter" value="3.00 mm" />
      <DimensionField id="height" label="Height" value="300 mm" />
      <div className="flex h-5 items-center">
        <label htmlFor="operation" className="w-[41px]">Operation</label>
        <div className="relative flex h-[18px] w-[107px] items-center border border-[#d8d8d8] bg-white">
          <svg viewBox="0 0 24 24" className="absolute left-px size-[11px]" aria-hidden="true">
            <path d="M2 6l4-4h12l4 8v9l-4 3H5l-3-3z" fill="#fff" stroke="#555" strokeWidth="2" />
            <circle cx="19" cy="5" r="4.500" fill="#f37b35" />
            <path d="M10 10h5v7h-5z" fill="#ccc" />
          </svg>
          <select id="operation" className="h-full w-full appearance-none pl-[14px]" defaultValue="new">
            <option value="new">New Body</option>
            <option value="join">Join</option>
            <option value="cut">Cut</option>
          </select>
          <Caret className="pointer-events-none absolute right-[3px] w-1" />
        </div>
      </div>
    </form>
    <footer className="mt-[13px] flex h-6 items-center border-t border-[#d6d6d6] pr-[7px] pl-[5px]">
      <svg viewBox="0 0 16 16" className="size-2" aria-hidden="true"><circle cx="8" cy="8" r="8" fill="#111" /><path d="M8 3v2M8 7v6" stroke="#fff" strokeWidth="2" /></svg>
      <button className="ml-auto h-[13px] w-10 border border-[#c4c4c4] bg-[#e8e8e8] text-[8px] leading-none text-[#777]">OK</button>
      <button className="ml-[7px] h-[13px] w-[41px] border border-[#c4c4c4] bg-[#e8e8e8] text-[8px] leading-none text-[#777]">Cancel</button>
    </footer>
  </section>
);

const Canvas = () => (
  <main className="relative min-h-[431px] flex-1 bg-white">
    <Model />
    <Browser />
    <ViewCube />
    <EditFeature />
    <div className="absolute top-[365px] left-[423px] flex h-[14px] w-[69px] items-center bg-[#f2f2f2] pl-1 text-[7px]">
      <span className="h-3 w-3 border-l border-[#ddd]" />
      <div className="flex h-3 w-[43px] items-center justify-center border border-[#ddd] bg-white">
        <input aria-label="Height value" defaultValue="300 mm" className="h-[9px] w-[26px] bg-[#0078d7] text-center text-white outline-none" />
      </div>
      <Caret className="ml-1 w-1" />
    </div>
    <div className="absolute bottom-[3px] left-[3px] flex h-4 w-[200px] items-center border border-[#e2e2e2] bg-[#f4f4f4] pr-[2px] pl-[15px] text-[7px] text-[#444]">
      <span className="flex-1">COMMENTS</span>
      <svg viewBox="0 0 14 8" className="h-2 w-[14px]" aria-hidden="true"><circle cx="4" cy="4" r="3" fill="#222" /><path d="M11 1v6" stroke="#999" /></svg>
    </div>
    <div className="absolute bottom-[2px] left-1/2 flex h-4 w-[168px] -translate-x-1/2 items-center gap-[6px] bg-[#f1f1f1] pl-px text-[#444]">
      {navTools.map(({ name, icon: Icon, caret }) => (
        <button key={name} aria-label={name} className="flex items-center gap-[2px]">
          <Icon className="size-[11px]" />
          {caret && <Caret className="w-1" />}
        </button>
      ))}
    </div>
    <span className="absolute right-6 bottom-[5px] text-[8px] leading-[10px] font-bold text-[#333]">Sketch Arc</span>
  </main>
);

const Timeline = () => (
  <footer className="flex h-[34px] items-center border-t border-[#c4c4c4] bg-[#f0f0f0] pr-2 pl-[6px]">
    <div className="flex gap-[6px]">
      {playback.map(({ name, d }) => (
        <button key={name} aria-label={name}>
          <svg viewBox="0 0 24 24" className="size-[11px]"><path d={d} fill="#333" /></svg>
        </button>
      ))}
    </div>
    <div className="relative ml-3 flex flex-1 items-center gap-1">
      <FormIcon className="size-3" />
      <BoxIcon className="size-3" />
      <ChamferIcon className="size-3" />
      <svg viewBox="0 0 52 26" className="absolute -top-[4px] left-0 h-[26px] w-[52px]" aria-hidden="true">
        <path d="M6 18v3h32v-3" fill="none" stroke="#aaa" />
        <path d="M40 0h10l-4 5v15h-2V5z" fill="#333" />
      </svg>
    </div>
    <button aria-label="Timeline settings"><GearIcon className="size-3" /></button>
  </footer>
);

const App = () => (
  <div className="flex min-h-screen flex-col font-['Liberation_Sans',Arial,sans-serif]">
    <TitleBar />
    <DocumentBar />
    <Toolbar />
    <Canvas />
    <Timeline />
  </div>
);

export default App;
